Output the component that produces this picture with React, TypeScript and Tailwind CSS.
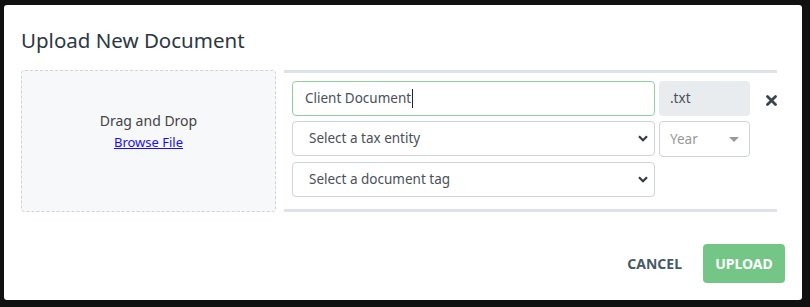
import { useState } from "react";

function ChevronDown() {
  return (
    <svg width="10" height="7" viewBox="0 0 10 7" className="shrink-0">
      <path d="M1 1.2 5 5.2 9 1.2" fill="none" stroke="#343a40" strokeWidth="2.2" />
    </svg>
  );
}

function CloseIcon() {
  return (
    <svg width="11" height="11" viewBox="0 0 11 11">
      <path d="M1.5 1.5 9.5 9.5M9.5 1.5 1.5 9.5" stroke="#37474f" strokeWidth="2.8" strokeLinecap="round" />
    </svg>
  );
}

function SelectBox({ label }: { label: string }) {
  return (
    <div className="flex h-[35px] w-[363px] items-center justify-between rounded-[4px] border border-[#ced4da] bg-white pl-[16px] pr-[6px] text-[13.5px] text-[#495057]">
      <span>{label}</span>
      <ChevronDown />
    </div>
  );
}

export default function App() {
  const [name] = useState("Client Document");

  return (
    <div
      className="h-[307px] w-[810px] overflow-hidden bg-[#111111] pl-[4px] pt-[5px]"
      style={{ fontFamily: '"Noto Sans", "Open Sans", sans-serif' }}
    >
      <div className="flex h-[295px] w-[798px] flex-col rounded-[3px] bg-white">
        <h2 className="pl-[17px] pt-[22px] text-[20.5px] leading-[27px] text-[#2c3842]">Upload New Document</h2>

        <div className="mt-[16px] flex gap-[8px] pl-[17px]">
          <div className="flex h-[142px] w-[255px] flex-col items-center justify-center rounded-[4px] border border-dashed border-[#cfd3d8] bg-[#f7f8fa] pb-[20px]">
            <p className="text-[14px] leading-[20px] text-[#444]">Drag and Drop</p>
            <a href="#" className="mt-[1px] text-[13px] leading-[20px] text-[#1a0dff] underline">
              Browse File
            </a>
          </div>

          <div className="flex h-[142px] w-[493px] gap-[16px] border-y-[3px] border-[#dee2e6] pl-[8px] pt-[8px]">
            <div className="flex flex-col gap-[5px]">
              <div className="flex gap-[4px]">
                <div className="flex h-[35px] w-[363px] items-center rounded-[4px] border border-[#8fd19e] bg-white pl-[12px] text-[13.5px] text-[#495057]">
                  <span>{name}</span>
                  <span className="ml-[1px] h-[19px] w-[1px] bg-[#222]" />
                </div>
                <div className="flex h-[35px] w-[91px] items-center rounded-[4px] bg-[#e9ecef] pl-[11px] text-[13.5px] text-[#495057]">
                  .txt
                </div>
              </div>
              <div className="flex gap-[4px]">
                <SelectBox label="Select a tax entity" />
                <div className="flex h-[36px] w-[91px] items-center justify-between rounded-[4px] border border-[#ced4da] bg-white pl-[10px] pr-[10px] text-[13.5px] text-[#999]">
                  <span>Year</span>
                  <svg width="10" height="5" viewBox="0 0 10 5">
                    <path d="M0 0h10L5 5z" fill="#9a9a9a" />
                  </svg>
                </div>
              </div>
              <SelectBox label="Select a document tag" />
            </div>
            <div className="pt-[14px]">
              <CloseIcon />
            </div>
          </div>
        </div>

        <div className="mt-auto flex items-center justify-end gap-[21px] pb-[17px] pr-[17px]">
          <button type="button" className="text-[14px] font-bold text-[#455a64]">
            CANCEL
          </button>
          <button
            type="button"
            className="h-[39px] w-[82px] rounded-[4px] bg-[#74c687] text-[14px] font-bold text-white"
          >
            UPLOAD
          </button>
        </div>
      </div>
    </div>
  );
}
